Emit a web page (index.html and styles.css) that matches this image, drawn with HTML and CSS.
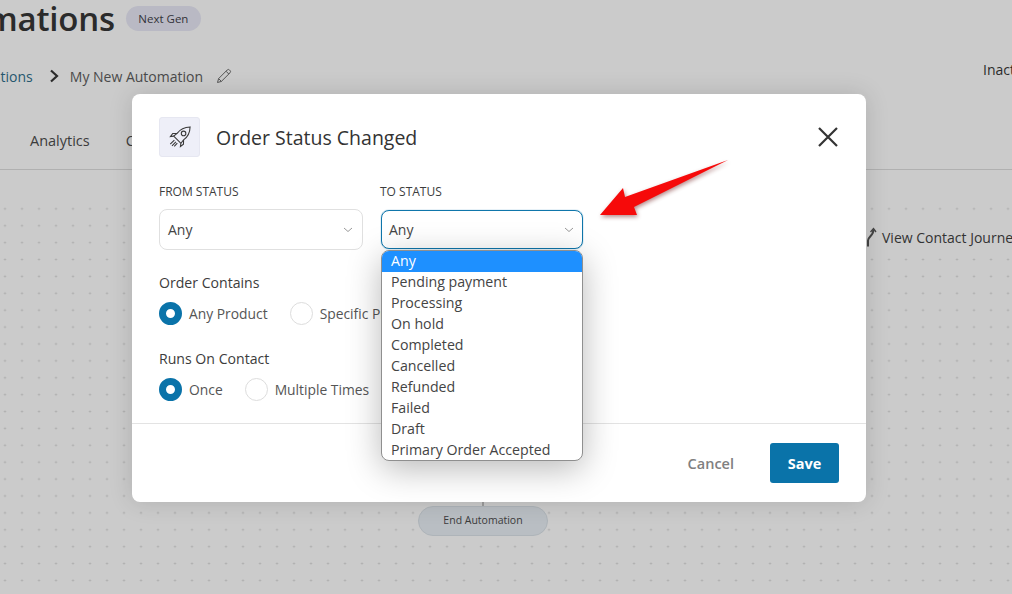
FILE: index.html
```html
<!DOCTYPE html>
<html lang="en">
<head>
<meta charset="utf-8">
<title>Order Status Changed</title>
<link rel="stylesheet" href="styles.css">
</head>
<body>
<div class="page">
  <header class="head">
    <div class="title-row">
      <h1 class="title">Automations</h1>
      <span class="pill">Next Gen</span>
    </div>
    <div class="crumb-row">
      <nav class="crumbs">
        <a class="crumb-link">Automations</a>
        <svg class="crumb-chev" viewBox="0 0 10 14"><path d="M2 1.500 8 7l-6 5.500" /></svg>
        <span>My New Automation</span>
        <svg class="pencil" viewBox="0 0 16 16"><path d="M1.500 14.500 2.600 10.600 11.200 2a1.600 1.600 0 0 1 2.300 0l.5.5a1.600 1.600 0 0 1 0 2.300L5.400 13.400ZM2.600 10.600l2.800 2.800M10 3.200l2.800 2.800" /></svg>
      </nav>
      <span class="state">Inactive</span>
    </div>
    <div class="tabs">
      <span class="tab">Analytics</span>
      <span class="tab">Contacts</span>
    </div>
  </header>
  <main class="canvas">
    <a class="journey">
      <svg class="journey-icon" viewBox="0 0 12 20"><path d="M3 19.500v-6C3 9.500 8.500 9 8.500 2.500" /><path class="journey-tip" d="M5.500 5 8.500 1.500 11 5" /></svg>
      <span class="journey-text">View Contact Journey</span>
    </a>
    <span class="link-line"></span>
    <span class="end-node">End Automation</span>
  </main>
</div>

<section class="modal">
  <div class="modal-top">
    <div class="modal-head">
      <span class="rocket-box">
        <svg class="rocket" viewBox="0 0 24 24">
          <path d="M8.500 13.500 6.200 11.200 9.300 8.700C12 5 16.500 2.800 21.300 2.700 21.200 7.500 19 12 15.300 14.700L12.800 17.800Z" />
          <circle cx="15.300" cy="8.700" r="2.100" />
          <path d="M9.300 8.700 5.300 8.800 3.200 11.600 6.200 11.200M15.300 14.700 15.200 18.700 12.400 20.800 12.800 17.800M6.800 14.800 3 18.600M8.200 16.600 4.600 20.200M9.500 17.600 6.700 20.700" />
        </svg>
      </span>
      <h2 class="modal-title">Order Status Changed</h2>
      <svg class="close" viewBox="0 0 20 20"><path d="M1 1 19 19M19 1 1 19" /></svg>
    </div>
    <div class="status-row">
      <div class="field">
        <label class="field-label">FROM STATUS</label>
        <div class="select"><span>Any</span><svg class="chev" viewBox="0 0 10 6"><path d="M1 1 5 4.500 9 1" /></svg></div>
      </div>
      <div class="field field-to">
        <label class="field-label">TO STATUS</label>
        <div class="select select-open"><span>Any</span><svg class="chev" viewBox="0 0 10 6"><path d="M1 1 5 4.500 9 1" /></svg></div>
      </div>
    </div>
    <h3 class="group-title group-first">Order Contains</h3>
    <div class="radios">
      <span class="radio radio-on"></span><span class="radio-text">Any Product</span>
      <span class="radio radio-gap"></span><span class="radio-text">Specific Products</span>
    </div>
    <h3 class="group-title group-second">Runs On Contact</h3>
    <div class="radios">
      <span class="radio radio-on"></span><span class="radio-text">Once</span>
      <span class="radio radio-gap"></span><span class="radio-text">Multiple Times</span>
    </div>
  </div>
  <footer class="modal-foot">
    <button class="btn-cancel">Cancel</button>
    <button class="btn-save">Save</button>
  </footer>
</section>

<ul class="menu">
  <li class="opt opt-active">Any</li>
  <li class="opt">Pending payment</li>
  <li class="opt">Processing</li>
  <li class="opt">On hold</li>
  <li class="opt">Completed</li>
  <li class="opt">Cancelled</li>
  <li class="opt">Refunded</li>
  <li class="opt">Failed</li>
  <li class="opt">Draft</li>
  <li class="opt">Primary Order Accepted</li>
</ul>

<svg class="arrow" viewBox="0 0 140 70"><polygon points="5,58 28,31 30,40 133,3 39,50 42,58" /></svg>
</body>
</html>
```
FILE: styles.css
```css
* { box-sizing: border-box; }
html, body { margin: 0; height: 100%; }
body {
  width: 1012px;
  height: 594px;
  overflow: hidden;
  position: relative;
  font-family: "Open Sans", "Noto Sans", "Liberation Sans", sans-serif;
  color: #3a3a3a;
  background: #cbcbcb;
}
.page { width: 1012px; height: 594px; display: flex; flex-direction: column; overflow: hidden; }
.head { height: 170px; border-bottom: 1px solid #b0b0b0; flex: none; }
.title-row { display: flex; align-items: center; height: 36px; margin-left: -89px; gap: 11px; }
.title { margin: 0; font-size: 33px; font-weight: 600; color: #2b2b2b; line-height: 40px; letter-spacing: -0.2px; position: relative; top: 1px; }
.pill {
  background: #b9b9c4; color: #33333a; font-size: 11.500px; font-weight: 500;
  height: 25px; line-height: 25px; padding: 0 12.500px; border-radius: 13px;
}
.crumb-row { display: flex; align-items: center; justify-content: space-between; height: 30px; margin: 25px 0 0 -51px; position: relative; }
.crumbs { display: flex; align-items: center; font-size: 14px; color: #4a4a4a; }
.crumb-link { color: #26586f; margin-right: 16px; }
.crumb-chev { width: 10px; height: 14px; margin-right: 11px; fill: none; stroke: #2b2b2b; stroke-width: 2.200; }
.pencil { width: 16px; height: 16px; margin-left: 13px; fill: none; stroke: #555; stroke-width: 1; }
.state { font-size: 14px; color: #2b2b2b; position: absolute; left: 1034px; top: -1px; white-space: nowrap; }
.tabs { display: flex; gap: 36px; padding-left: 30px; margin-top: 40px; font-size: 14.500px; font-weight: 500; color: #3c3c3c; }
.canvas {
  flex: 1; position: relative;
  background-color: #cbcbcb;
  background-image: linear-gradient(#cbcbcb 0 34px, transparent 34px), radial-gradient(circle, #a6a6a6 0.7px, transparent 1.2px);
  background-size: 100% 100%, 17px 16.900px;
  background-position: 0 0, -3.500px 13.500px;
}
.journey { position: absolute; left: 848px; top: 53px; width: 164px; height: 28px; padding-left: 17px; background: #cbcbcb; font-size: 14px; color: #333; display: flex; align-items: center; overflow: hidden; gap: 5px; }
.journey-text { white-space: nowrap; flex: none; }
.journey-icon { width: 12px; height: 20px; flex: none; fill: none; stroke: #444; stroke-width: 2; }
.journey-tip { stroke-width: 1.300; }
.link-line { position: absolute; left: 482px; top: 320px; width: 2px; height: 18px; background: #9d9d9d; }
.end-node {
  position: absolute; left: 418px; top: 336px; width: 130px; height: 30px;
  background: #b9bec3; border: 1px solid #aeb4b9; border-radius: 15px;
  font-size: 10.500px; font-weight: 500; color: #3c3c3c; text-align: center; line-height: 27px;
}

.modal {
  position: absolute; left: 132px; top: 94px; width: 734px; height: 408px;
  background: #fff; border-radius: 8px;
  box-shadow: 0 0 24px rgba(0,0,0,.14);
  display: flex; flex-direction: column;
}
.modal-top { padding: 23px 27px 0; height: 330px; border-bottom: 1px solid #e3e3e3; flex: none; }
.modal-head { display: flex; align-items: center; height: 40px; }
.rocket-box { width: 41px; height: 40px; background: #eeeff8; border: 1px solid #e6e7f1; border-radius: 3px; display: flex; align-items: center; justify-content: center; flex: none; }
.rocket { width: 26px; height: 26px; fill: none; stroke: #3a3a3a; stroke-width: 1; }
.modal-title { margin: 0 0 0 16px; font-size: 19.500px; font-weight: 500; color: #333; flex: 1; line-height: 42px; height: 40px; }
.close { width: 20px; height: 20px; fill: none; stroke: #333; stroke-width: 2.200; margin-right: 1px; }
.status-row { display: flex; margin-top: 27px; }
.field { width: 204px; }
.field-to { margin-left: 17px; width: 203px; }
.field-label { display: block; font-size: 12px; font-weight: 400; color: #3d3d3d; line-height: 16px; }
.select { margin-top: 9px; height: 41px; border: 1px solid #e0e0e0; border-radius: 8px; display: flex; align-items: center; justify-content: space-between; padding: 0 8px; font-size: 14px; color: #444; }
.select-open { height: 39px; margin-top: 10px; margin-left: 1px; border: 1px solid #0f76ab; box-shadow: 0 0 1px #0a73a9; padding: 0 7px 0 7px; }
.chev { width: 10px; height: 6px; fill: none; stroke: #9a9a9a; stroke-width: 1; margin-right: 1px; }
.group-title { margin: 0; font-size: 14.100px; font-weight: 500; color: #3c3c3c; line-height: 20px; }
.group-first { margin-top: 23px; }
.group-second { margin-top: 24px; }
.radios { display: flex; align-items: center; margin-top: 8px; font-size: 13.850px; color: #555; height: 24px; white-space: nowrap; }
.radio { width: 23px; height: 23px; border-radius: 50%; border: 1px solid #ddd; flex: none; }
.radio-on { border: 7px solid #0a73a9; }
.radio-gap { margin-left: 22px; }
.radio-text { margin-left: 7px; }
.modal-foot { flex: 1; display: flex; justify-content: flex-end; align-items: flex-start; padding: 19px 27px 0 0; }
.btn-cancel { font: 600 14.500px "Open Sans", sans-serif; color: #808080; background: none; border: 0; padding: 0; height: 40px; margin-right: 36px; }
.btn-save { font: 700 14.500px "Open Sans", sans-serif; color: #fff; background: #0a73a9; border: 0; border-radius: 3px; width: 69px; height: 40px; }

.menu {
  position: absolute; left: 381px; top: 250px; width: 202px; height: 211px;
  margin: 0; padding: 0; list-style: none;
  background: #fff; border: 1px solid #8f8f8f; border-radius: 8px; overflow: hidden;
  box-shadow: 0 8px 34px rgba(0,0,0,.28);
}
.opt { height: 21px; line-height: 19px; padding-left: 9px; font-size: 14.200px; color: #444; white-space: nowrap; }
.opt-active { background: #1e90ff; color: #fff; }
.arrow { position: absolute; left: 595px; top: 157px; width: 140px; height: 70px; fill: #f60a0a; filter: drop-shadow(1px 2px 2px rgba(90,0,0,.45)); }
```
